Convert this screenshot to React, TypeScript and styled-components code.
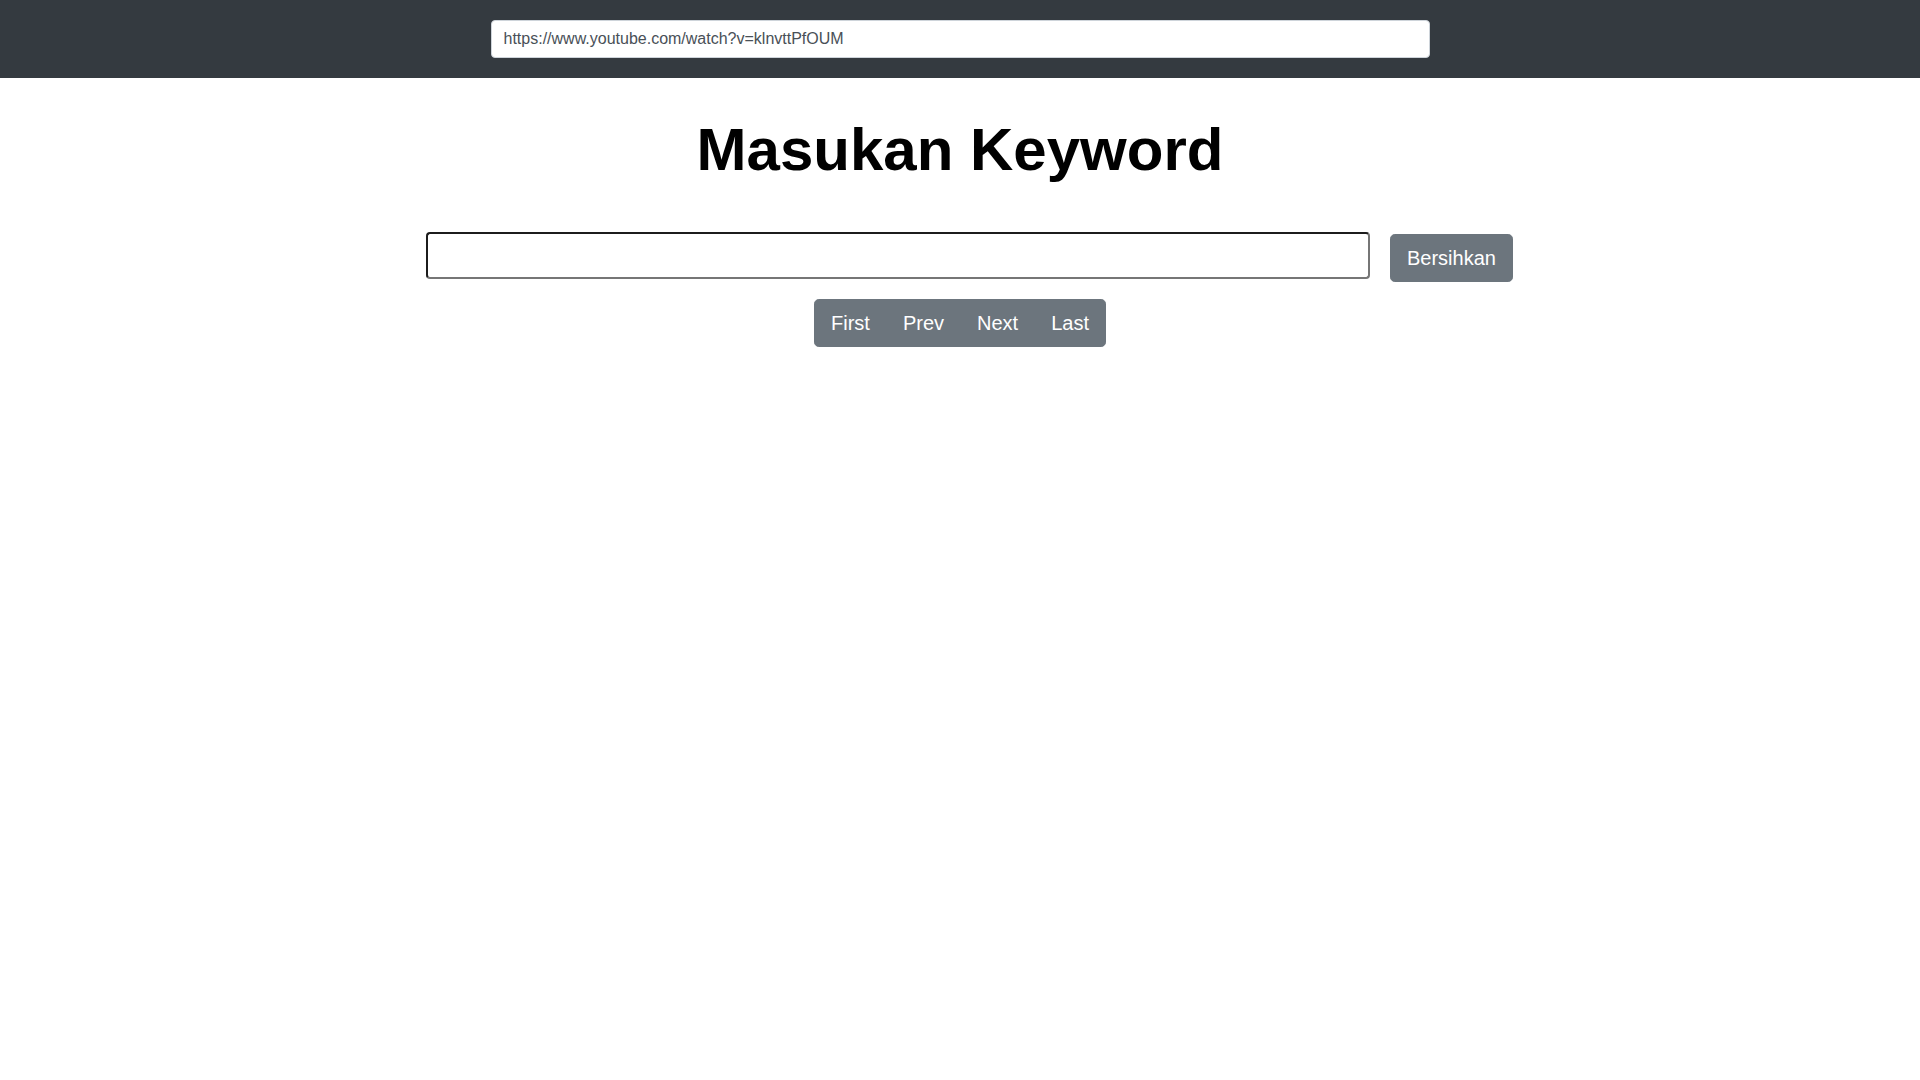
import { createGlobalStyle } from 'styled-components';
import styled from 'styled-components';

const GlobalStyle = createGlobalStyle`
  html, body {
    margin: 0;
    padding: 0;
    background: #fff;
  }
  body {
    font-family: "Liberation Sans", Arial, Helvetica, sans-serif;
    color: #212529;
  }
`

const NavBar = styled.nav`
  background-color: #343a40;
  padding: 20px 0;
  display: flex;
  justify-content: center;
`

const UrlInput = styled.input`
  box-sizing: border-box;
  width: 939px;
  height: 38px;
  padding: 6px 12px;
  font-family: inherit;
  font-size: 16px;
  line-height: 1.5;
  color: #495057;
  background: #fff;
  border: 1px solid #ced4da;
  border-radius: 4px;
  outline: none;
`

const Main = styled.main`
  width: 1110px;
  margin: 0 auto;
  display: flex;
  flex-direction: column;
  align-items: center;
`

const Title = styled.h1`
  margin: 36px 0 46px;
  font-size: 60px;
  font-weight: 700;
  line-height: 1.2;
  color: #000;
`

const SearchRow = styled.div`
  align-self: stretch;
  display: flex;
  align-items: flex-start;
  gap: 20px;
  padding-left: 21px;
`

const SearchInput = styled.input`
  box-sizing: border-box;
  width: 944px;
  height: 47px;
  padding: 4px 10px;
  font-family: inherit;
  font-size: 20px;
  background: #fff;
  border: 2px solid;
  border-color: #1c1c1c #767676 #767676 #1c1c1c;
  border-radius: 4px;
  outline: none;
`

const Button = styled.button<{ $top?: number }>`
  box-sizing: border-box;
  margin-top: ${p => p.$top ?? 0}px;
  padding: 8px 16px;
  font-family: inherit;
  font-size: 20px;
  line-height: 1.5;
  color: #fff;
  background-color: #6c757d;
  border: 1px solid #6c757d;
  border-radius: 4.8px;
  cursor: pointer;
`

const PagerGroup = styled.div`
  display: inline-flex;
  margin-top: 17px;

  & > ${Button} {
    border-radius: 0;
  }
  & > ${Button} + ${Button} {
    margin-left: -1px;
  }
  & > ${Button}:first-child {
    border-radius: 4.8px 0 0 4.8px;
  }
  & > ${Button}:last-child {
    border-radius: 0 4.8px 4.8px 0;
  }
`

export default function App() {
  return (
    <>
      <GlobalStyle />
      <NavBar>
        <UrlInput defaultValue="https://www.youtube.com/watch?v=klnvttPfOUM" />
      </NavBar>
      <Main>
        <Title>Masukan Keyword</Title>
        <SearchRow>
          <SearchInput />
          <Button $top={2}>Bersihkan</Button>
        </SearchRow>
        <PagerGroup>
          {['First', 'Prev', 'Next', 'Last'].map(label => (
            <Button key={label}>{label}</Button>
          ))}
        </PagerGroup>
      </Main>
    </>
  );
}
